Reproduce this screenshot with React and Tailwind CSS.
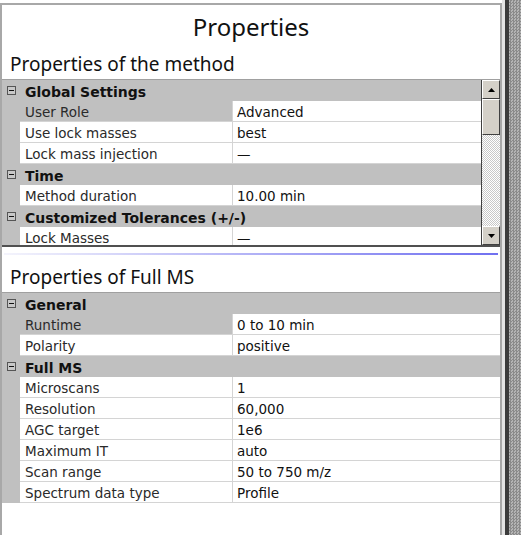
import React from "react";

const tableFont = { fontFamily: '"DejaVu Sans", Verdana, sans-serif' };
const headFont = { fontFamily: '"Noto Sans", "Open Sans", sans-serif' };

function Minus() {
  return (
    <div className="w-[9px] h-[9px] border border-[#555] bg-[#c8c8c8] flex items-center justify-center">
      <div className="w-[5px] h-px bg-[#111]" />
    </div>
  );
}

function Header({ label }) {
  return (
    <div className="flex h-[21px] bg-[#c0c0c0] shrink-0">
      <div className="w-[18px] flex items-center justify-center pl-[1px]">
        <Minus />
      </div>
      <div className="pl-[5px] pt-[2px] flex items-center text-[14px] font-bold text-[#111] leading-none whitespace-nowrap">
        {label}
      </div>
    </div>
  );
}

function Row({ name, value, selected }) {
  return (
    <div className="flex h-[21px] bg-[#c0c0c0] shrink-0">
      <div className="w-[18px]" />
      <div
        className={
          "w-[213px] border-b border-r border-[#d4d4d4] pl-[5px] pt-[3px] flex items-center text-[13.5px] text-[#2a2a2a] leading-none whitespace-nowrap " +
          (selected ? "bg-[#c0c0c0]" : "bg-white")
        }
      >
        {name}
      </div>
      <div className="flex-1 bg-white border-b border-[#d4d4d4] pl-[4px] pt-[3px] flex items-center text-[13.5px] text-[#111] leading-none whitespace-nowrap">
        {value}
      </div>
    </div>
  );
}

function Rows({ items }) {
  return items.map((it, i) =>
    it.h ? (
      <Header key={i} label={it.h} />
    ) : (
      <Row key={i} name={it.n} value={it.v} selected={it.s} />
    )
  );
}

function ScrollBtn({ up }) {
  return (
    <div className="h-[19px] bg-[#d4d0c8] border-t border-l border-t-white border-l-white border-r border-b border-r-[#404040] border-b-[#404040] flex items-center justify-center shrink-0">
      <svg width="7" height="4" viewBox="0 0 7 4">
        {up ? (
          <polygon points="0,4 7,4 3.5,0" fill="#000" />
        ) : (
          <polygon points="0,0 7,0 3.5,4" fill="#000" />
        )}
      </svg>
    </div>
  );
}

const table1 = [
  { h: "Global Settings" },
  { n: "User Role", v: "Advanced", s: true },
  { n: "Use lock masses", v: "best" },
  { n: "Lock mass injection", v: "—" },
  { h: "Time" },
  { n: "Method duration", v: "10.00 min" },
  { h: "Customized Tolerances (+/-)" },
  { n: "Lock Masses", v: "—" },
];

const table2 = [
  { h: "General" },
  { n: "Runtime", v: "0 to 10 min", s: true },
  { n: "Polarity", v: "positive" },
  { h: "Full MS" },
  { n: "Microscans", v: "1" },
  { n: "Resolution", v: "60,000" },
  { n: "AGC target", v: "1e6" },
  { n: "Maximum IT", v: "auto" },
  { n: "Scan range", v: "50 to 750 m/z" },
  { n: "Spectrum data type", v: "Profile" },
];

export default function App() {
  return (
    <div className="w-[521px] h-[535px] flex bg-white overflow-hidden">
      <div className="w-[502px] shrink-0 flex flex-col pt-[3px]">
        <div className="flex-1 flex flex-col border-t-2 border-l-2 border-r-2 border-[#a8a8a8] bg-white min-h-0">
          <div
            className="h-[47px] pb-[4px] flex items-center justify-center text-[24px] text-[#111] shrink-0"
            style={headFont}
          >
            Properties
          </div>
          <div
            className="h-[27px] pl-[8px] text-[19px] text-[#111] leading-[24px] shrink-0"
            style={headFont}
          >
            Properties of the method
          </div>
          <div
            className="h-[168px] flex border-t border-[#a0a0a0] border-b-2 border-b-[#505050] shrink-0"
            style={tableFont}
          >
            <div className="flex-1 flex flex-col overflow-hidden">
              <Rows items={table1} />
            </div>
            <div className="w-[19px] flex flex-col border-l border-[#404040]">
              <ScrollBtn up />
              <div className="h-[36px] bg-[#d4d0c8] border-t border-l border-t-white border-l-white border-r border-b border-r-[#404040] border-b-[#404040] shrink-0" />
              <div className="flex-1 bg-[repeating-conic-gradient(#c8c8c8_0%_25%,#ffffff_0%_50%)] bg-[length:2px_2px]" />
              <ScrollBtn />
            </div>
          </div>
          <div className="h-[6px] shrink-0" />
          <div className="mx-[2px] h-[2px] bg-[linear-gradient(to_right,#f4f4fc,#7070f0)] shrink-0" />
          <div className="h-[10px] shrink-0" />
          <div
            className="h-[27px] pl-[8px] text-[19px] text-[#111] leading-[24px] shrink-0"
            style={headFont}
          >
            Properties of Full MS
          </div>
          <div
            className="flex-1 flex flex-col border-t border-[#a0a0a0]"
            style={tableFont}
          >
            <Rows items={table2} />
          </div>
        </div>
      </div>
      <div className="w-[3px] bg-[#e4e4e4]" />
      <div className="w-[4px] bg-[#3c3c3c]" />
      <div className="flex-1 bg-[repeating-conic-gradient(#8a8a8a_0%_25%,#b4b4b4_0%_50%)] bg-[length:3px_3px]" />
    </div>
  );
}
